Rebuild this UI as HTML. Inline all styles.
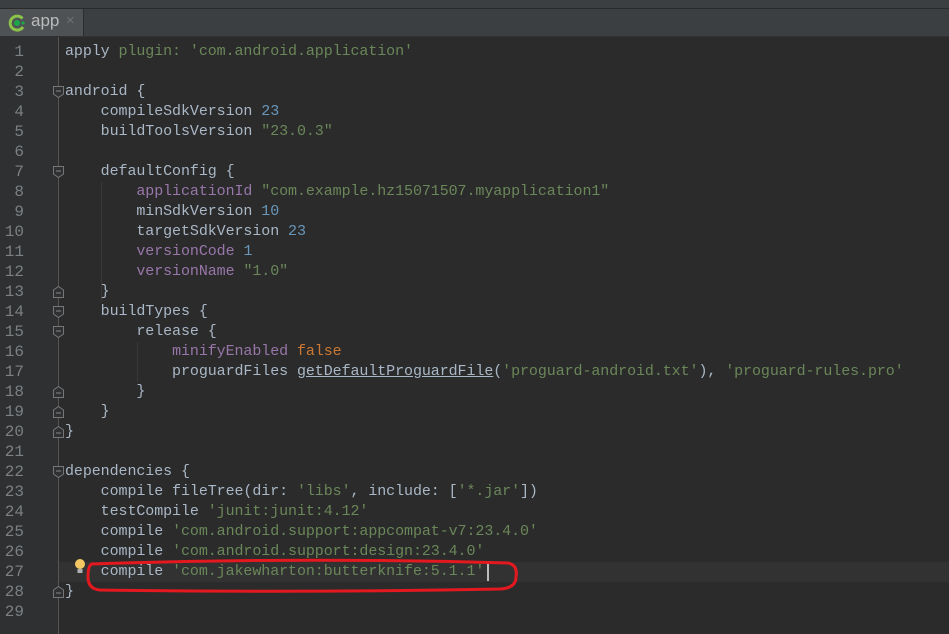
<!DOCTYPE html>
<html><head><meta charset="utf-8"><style>
html,body{margin:0;padding:0;width:949px;height:634px;overflow:hidden;background:#2b2b2b;font-family:"Liberation Mono",monospace;}
#top{position:absolute;left:0;top:0;width:949px;height:8px;background:#3c3f41;border-bottom:1px solid #2a2a2a;}
#tabbar{position:absolute;left:0;top:9px;width:949px;height:27px;background:#3c3f41;border-bottom:1px solid #323232;}
#tab{position:absolute;left:0;top:0;width:83px;height:27px;background:#4e5254;border-right:1px solid #2d2d2d;}
#tab .t{position:absolute;left:31px;top:2px;font-family:"Liberation Sans",sans-serif;font-size:17px;color:#bbbbbb;}
#tab .x{position:absolute;left:66px;top:3px;font-family:"Liberation Sans",sans-serif;font-size:15px;color:#6e7173;}
#gutter{position:absolute;left:0;top:37px;width:58px;height:597px;background:#2f3031;border-right:1px solid #555;}
.ln{position:absolute;left:0;width:24px;text-align:right;color:#7c8083;font-size:16px;line-height:20px;height:20px;}
.cl{position:absolute;left:65px;height:20px;line-height:20px;font-size:15px;letter-spacing:-0.08px;white-space:pre;color:#a9b7c6;}
.s{color:#6a8759}.n{color:#6897bb}.v{color:#9876aa}.k{color:#cc7832}.u{text-decoration:underline}
#cur{position:absolute;left:59px;top:562px;width:890px;height:20px;background:#323232;}
.fold{position:absolute;left:53px;width:11px;height:12px;}
.guide{position:absolute;width:1px;background:#393939;}
</style></head><body>
<div id="top"></div>
<div id="tabbar"><div id="tab">
<svg style="position:absolute;left:8px;top:5px" width="18" height="18" viewBox="0 0 18 18"><path d="M14.5 4.5 A7 7 0 1 0 15 13" fill="none" stroke="#8bc34a" stroke-width="3"/><circle cx="9" cy="9" r="3" fill="#1ba84a"/><circle cx="15" cy="9" r="1.6" fill="#1ba84a"/></svg>
<span class="t">app</span><span class="x">×</span></div></div>
<div id="gutter"></div>
<div id="cur"></div>
<div class="guide" style="left:101px;top:182px;height:120px"></div>
<div class="guide" style="left:137px;top:342px;height:40px"></div>
<div id="lines"></div>
<div id="code"></div>
<div id="folds"></div>
<svg style="position:absolute;left:73px;top:558px" width="14" height="18" viewBox="0 0 14 18"><circle cx="7" cy="6" r="5" fill="#f3c763"/><rect x="4.5" y="11" width="5" height="4" fill="#b0b0b0"/></svg>
<div style="position:absolute;left:487px;top:563px;width:2px;height:18px;background:#bbb"></div>
<svg style="position:absolute;left:80px;top:555px" width="445" height="40"><path d="M12 9 Q 220 2 428 8 Q 438 10 436 22 Q 436 33 420 34 Q 220 38 20 35 Q 8 34 8 22 Q 8 10 12 9 Z" fill="none" stroke="#e3191f" stroke-width="3"/></svg>
<script>
var L=[
"apply <span class=s>plugin: 'com.android.application'</span>",
"",
"android {",
"    compileSdkVersion <span class=n>23</span>",
"    buildToolsVersion <span class=s>\"23.0.3\"</span>",
"",
"    defaultConfig {",
"        <span class=v>applicationId</span> <span class=s>\"com.example.hz15071507.myapplication1\"</span>",
"        minSdkVersion <span class=n>10</span>",
"        targetSdkVersion <span class=n>23</span>",
"        <span class=v>versionCode</span> <span class=n>1</span>",
"        <span class=v>versionName</span> <span class=s>\"1.0\"</span>",
"    }",
"    buildTypes {",
"        release {",
"            <span class=v>minifyEnabled</span> <span class=k>false</span>",
"            proguardFiles <span class=u>getDefaultProguardFile</span>(<span class=s>'proguard-android.txt'</span>), <span class=s>'proguard-rules.pro'</span>",
"        }",
"    }",
"}",
"",
"dependencies {",
"    compile fileTree(dir: <span class=s>'libs'</span>, include: [<span class=s>'*.jar'</span>])",
"    testCompile <span class=s>'junit:junit:4.12'</span>",
"    compile <span class=s>'com.android.support:appcompat-v7:23.4.0'</span>",
"    compile <span class=s>'com.android.support:design:23.4.0'</span>",
"    compile <span class=s>'com.jakewharton:butterknife:5.1.1'</span>",
"}",
""];
var a="",b="";
for(var i=0;i<L.length;i++){var t=42+i*20;
a+='<div class="ln" style="top:'+t+'px">'+(i+1)+'</div>';
b+='<div class="cl" style="top:'+t+'px">'+L[i]+'</div>';}
document.getElementById('lines').innerHTML=a;document.getElementById('code').innerHTML=b;
var open=[3,7,14,15,22],close=[13,18,19,20,28],f="";
open.forEach(function(n){var t=42+(n-1)*20+4;f+='<svg class="fold" style="top:'+t+'px" viewBox="0 0 11 12"><path d="M0.5 0.5H10.5V8L5.5 11.5L0.5 8Z" fill="#2f3031" stroke="#777"/><path d="M3 5H8" stroke="#888"/></svg>';});
close.forEach(function(n){var t=42+(n-1)*20+4;f+='<svg class="fold" style="top:'+t+'px" viewBox="0 0 11 12"><path d="M0.5 11.5H10.5V4L5.5 0.5L0.5 4Z" fill="#2f3031" stroke="#777"/><path d="M3 7H8" stroke="#888"/></svg>';});
document.getElementById('folds').innerHTML=f;
</script>
</body></html>
